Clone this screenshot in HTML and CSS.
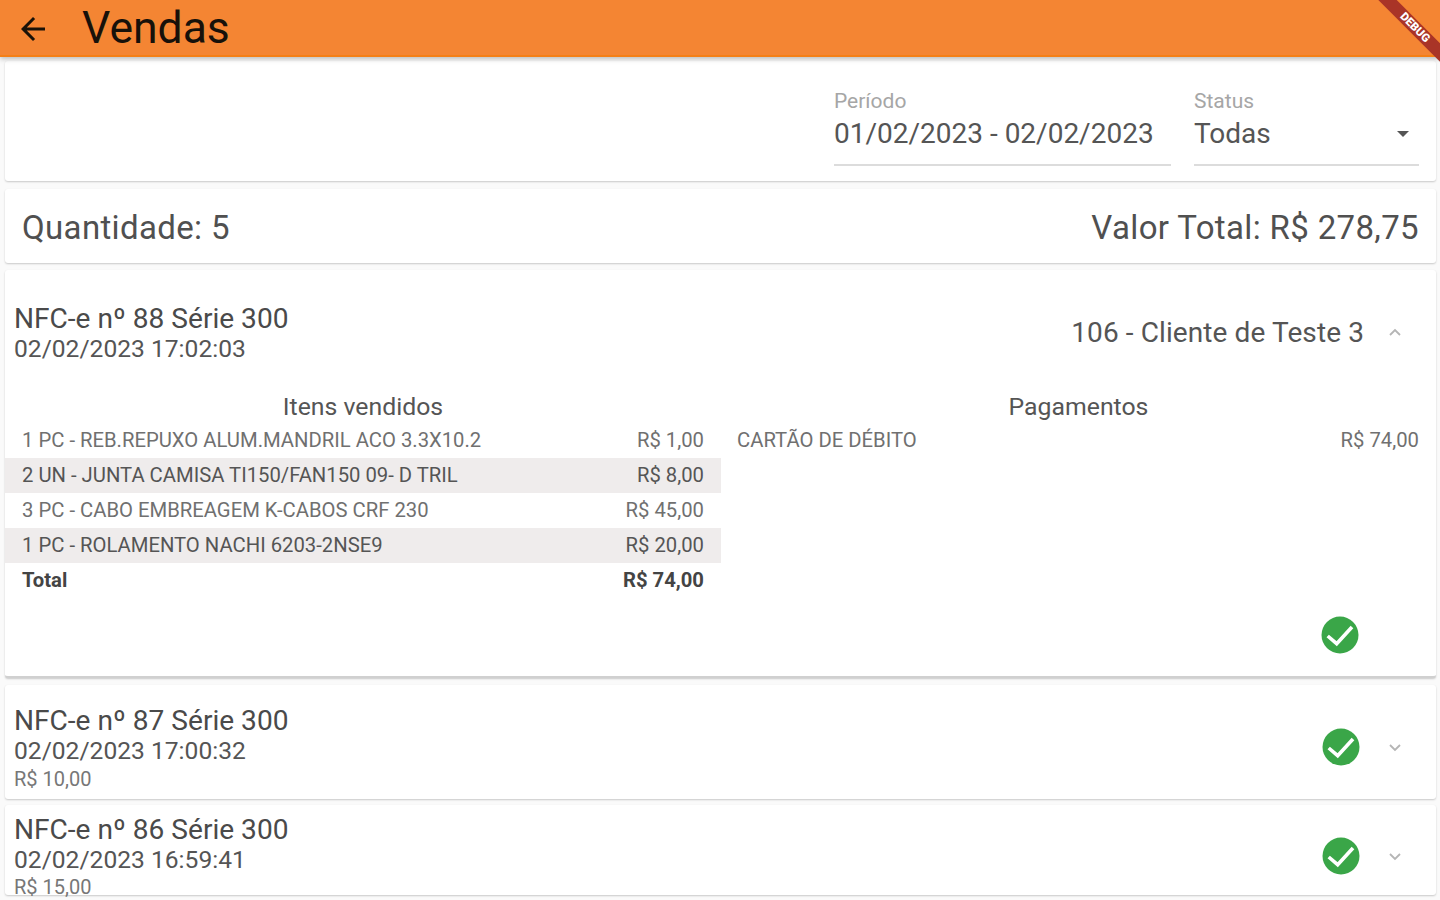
FILE: index.html
```html
<!DOCTYPE html>
<html lang="pt-BR">
<head>
    <meta charset="UTF-8">
    <title>Vendas</title>
    <link rel="stylesheet" href="styles.css">
</head>
<body>
    <header class="appbar">
        <svg class="back" width="36" height="36" viewBox="0 0 24 24"><path d="M20 11H7.83l5.59-5.59L12 4l-8 8 8 8 1.41-1.41L7.83 13H20v-2z"/></svg>
        <h1>Vendas</h1>
    </header>
    <div class="ribbon"><span>DEBUG</span></div>

    <section class="card filters">
        <div class="field field-period">
            <label>Período</label>
            <div class="value">01/02/2023 - 02/02/2023</div>
        </div>
        <div class="field field-status">
            <label>Status</label>
            <div class="value">Todas<span class="caret"></span></div>
        </div>
    </section>

    <section class="card totals">
        <span>Quantidade: 5</span>
        <span>Valor Total: R$ 278,75</span>
    </section>

    <section class="card sale open">
        <div class="sale-head">
            <div class="sale-info">
                <div class="sale-title">NFC-e nº 88 Série 300</div>
                <div class="sale-date">02/02/2023 17:02:03</div>
            </div>
            <div class="sale-client">106 - Cliente de Teste 3</div>
            <svg class="chev" width="24" height="24" viewBox="0 0 24 24"><path d="M7 15l5-5 5 5"/></svg>
        </div>
        <div class="details">
            <div class="col">
                <div class="col-title">Itens vendidos</div>
                <div class="row"><span>1 PC - REB.REPUXO ALUM.MANDRIL ACO 3.3X10.2</span><span>R$ 1,00</span></div>
                <div class="row alt"><span>2 UN - JUNTA CAMISA TI150/FAN150 09- D TRIL</span><span>R$ 8,00</span></div>
                <div class="row"><span>3 PC - CABO EMBREAGEM K-CABOS CRF 230</span><span>R$ 45,00</span></div>
                <div class="row alt"><span>1 PC - ROLAMENTO NACHI 6203-2NSE9</span><span>R$ 20,00</span></div>
                <div class="row total"><span>Total</span><span>R$ 74,00</span></div>
            </div>
            <div class="col col-pay">
                <div class="col-title">Pagamentos</div>
                <div class="row"><span>CARTÃO DE DÉBITO</span><span>R$ 74,00</span></div>
            </div>
        </div>
        <div class="sale-foot">
            <svg class="ok" width="38" height="38" viewBox="0 0 38 38"><circle cx="19" cy="19" r="18.5"/><path d="M6.7 20l9 7.7L31 11"/></svg>
        </div>
    </section>

    <section class="card sale closed">
        <div class="sale-info">
            <div class="sale-title">NFC-e nº 87 Série 300</div>
            <div class="sale-date">02/02/2023 17:00:32</div>
            <div class="sale-price">R$ 10,00</div>
        </div>
        <svg class="ok" width="38" height="38" viewBox="0 0 38 38"><circle cx="19" cy="19" r="18.5"/><path d="M6.7 20l9 7.7L31 11"/></svg>
        <svg class="chev" width="24" height="24" viewBox="0 0 24 24"><path d="M7 10l5 5 5-5"/></svg>
    </section>

    <section class="card sale closed last">
        <div class="sale-info">
            <div class="sale-title">NFC-e nº 86 Série 300</div>
            <div class="sale-date">02/02/2023 16:59:41</div>
            <div class="sale-price">R$ 15,00</div>
        </div>
        <svg class="ok" width="38" height="38" viewBox="0 0 38 38"><circle cx="19" cy="19" r="18.5"/><path d="M6.7 20l9 7.7L31 11"/></svg>
        <svg class="chev" width="24" height="24" viewBox="0 0 24 24"><path d="M7 10l5 5 5-5"/></svg>
    </section>
</body>
</html>
```

FILE: styles.css
```css
* {
    margin: 0;
    padding: 0;
    box-sizing: border-box;
}

html, body {
    height: 900px;
    overflow: hidden;
}

body {
    background: #fafafa;
    font-family: Roboto, "Liberation Sans", sans-serif;
    color: #4a4a4a;
    padding: 0 4px 0 5px;
}

.appbar {
    display: flex;
    align-items: center;
    height: 57px;
    margin: 0 -4px 0 -5px;
    padding: 3px 0 0 15px;
    background: #f48533;
    border-bottom: 2px solid #f47f16;
    box-shadow: 0 2px 5px rgba(0, 0, 0, 0.25);
    position: relative;
}

.back {
    fill: #1a1208;
}

.appbar h1 {
    margin-left: 31px;
    margin-top: -3px;
    font-size: 44.5px;
    font-weight: 400;
    color: #17110a;
}

.ribbon {
    position: absolute;
    top: 0;
    right: 0;
    width: 64px;
    height: 64px;
    overflow: hidden;
}

.ribbon span {
    position: absolute;
    top: 21px;
    left: -16px;
    width: 110px;
    height: 13px;
    line-height: 13px;
    background: #a93427;
    color: #fff;
    font-size: 11.5px;
    font-weight: 900;
    text-align: center;
    transform: rotate(45deg);
}

.card {
    background: #fff;
    border-radius: 3px;
    box-shadow: 0 1px 2px rgba(0, 0, 0, 0.2);
}

.filters {
    display: flex;
    justify-content: flex-end;
    gap: 23px;
    height: 120px;
    margin-top: 4px;
    padding: 28px 17px 0 0;
}

.field {
    height: 77px;
    border-bottom: 2px solid #dcdcdc;
}

.field-period {
    width: 337px;
}

.field-status {
    width: 225px;
}

.field label {
    display: block;
    font-size: 21px;
    line-height: 24px;
    color: #a6a6a6;
}

.field .value {
    display: flex;
    justify-content: space-between;
    align-items: center;
    margin-top: 2px;
    font-size: 28px;
    line-height: 38px;
    white-space: nowrap;
    color: #555;
}

.caret {
    width: 0;
    height: 0;
    margin-right: 10px;
    border: 6px solid transparent;
    border-top-color: #555;
    border-bottom: 0;
}

.totals {
    display: flex;
    justify-content: space-between;
    align-items: center;
    height: 74px;
    margin-top: 8px;
    padding: 2px 17px 0;
    font-size: 33px;
    letter-spacing: 0.35px;
    color: #505050;
}

.sale-title {
    font-size: 28.1px;
    line-height: 34px;
    color: #4a4a4a;
}

.sale-date {
    margin-top: -1px;
    font-size: 24.6px;
    line-height: 28px;
    color: #555;
}

.sale-price {
    margin-top: 1px;
    font-size: 20px;
    line-height: 26px;
    color: #777;
}

.chev {
    flex: none;
    fill: none;
    stroke: #b5b5b5;
    stroke-width: 1.8;
}

.ok circle {
    fill: #3aa648;
}

.ok path {
    fill: none;
    stroke: #fff;
    stroke-width: 3.6;
}

.open {
    height: 408px;
    margin-top: 7px;
    margin-bottom: -1px;
    border-bottom: 2px solid #d0d0d0;
}

.sale-head {
    display: flex;
    align-items: center;
    height: 116px;
    padding: 8px 29px 0 9px;
}

.sale-head .sale-info {
    flex: 1;
}

.sale-client {
    margin-right: 19px;
    font-size: 28px;
    letter-spacing: 0.1px;
    color: #555;
}

.details {
    display: grid;
    grid-template-columns: 716px 1fr;
}

.col {
    min-width: 0;
}

.col-title {
    height: 37px;
    padding-top: 7px;
    font-size: 24.8px;
    line-height: 28px;
    text-align: center;
    color: #555;
}

.row {
    display: flex;
    justify-content: space-between;
    align-items: center;
    height: 35px;
    padding: 0 17px 2px;
    font-size: 20.25px;
    color: #707070;
}

.col-pay .row {
    padding-left: 16px;
}

.alt {
    background: #efecec;
    color: #555;
}

.total {
    font-weight: 700;
    color: #444;
}

.sale-foot {
    display: flex;
    justify-content: flex-end;
    padding: 18px 77px 0 0;
}

.closed {
    display: flex;
    align-items: center;
    padding: 0 29px 0 9px;
}

.closed .sale-info {
    flex: 1;
}

.closed .ok {
    margin-right: 23px;
    margin-bottom: 2px;
}

.closed .chev {
    margin-bottom: 2px;
}

.sale.closed {
    height: 114px;
    margin-top: 8px;
    padding-top: 17px;
    padding-bottom: 6px;
}

.sale.last {
    height: 90px;
    margin-top: 6px;
    padding-top: 8px;
    padding-bottom: 0;
    align-items: flex-start;
}

.sale.last .sale-price {
    line-height: 24px;
}

.sale.last .ok {
    margin-top: 24px;
}

.sale.last .chev {
    margin-top: 31px;
}
```
